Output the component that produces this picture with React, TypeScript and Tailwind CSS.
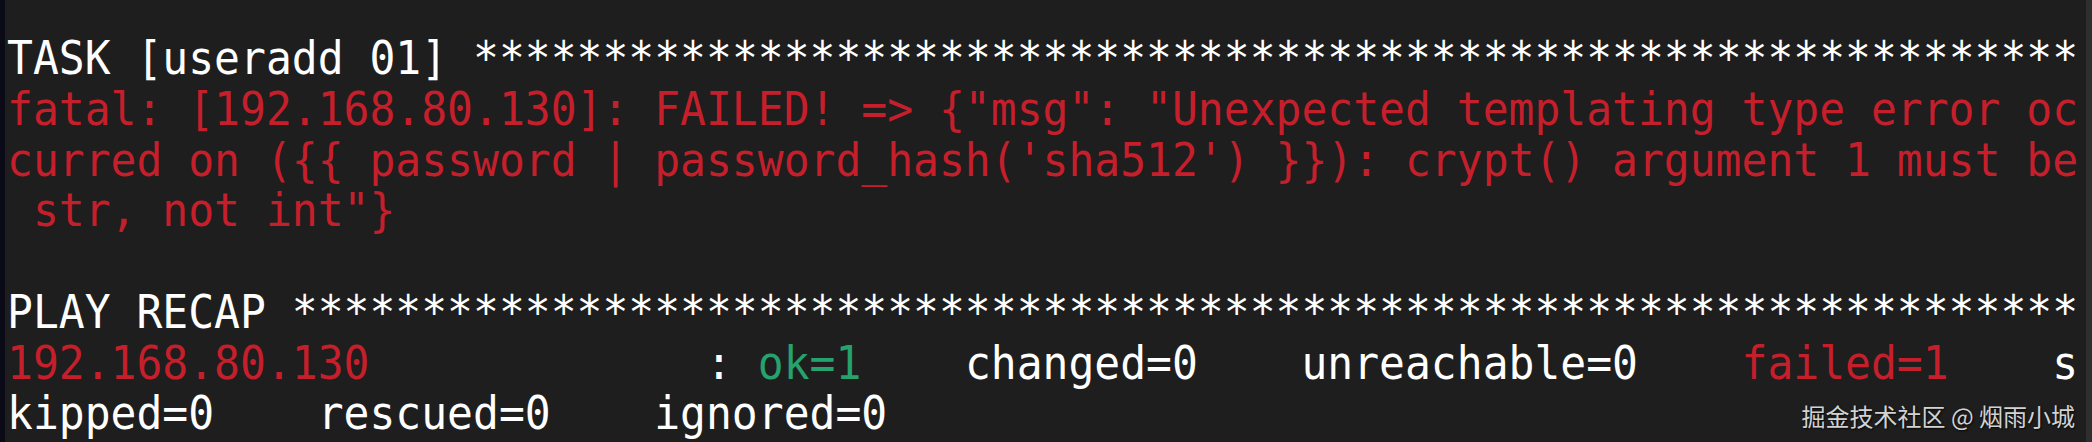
const mono = "font-['DejaVu_Sans_Mono',monospace]";

const lines: { text: string; color: string }[][] = [
  [
    { text: "TASK [useradd 01] ", color: "text-white" },
    { text: "*".repeat(62), color: "text-white" },
  ],
  [
    {
      text: 'fatal: [192.168.80.130]: FAILED! => {"msg": "Unexpected templating type error oc',
      color: "text-[#c61f2c]",
    },
  ],
  [
    {
      text: "curred on ({{ password | password_hash('sha512') }}): crypt() argument 1 must be",
      color: "text-[#c61f2c]",
    },
  ],
  [{ text: ' str, not int"}', color: "text-[#c61f2c]" }],
  [{ text: " ", color: "text-white" }],
  [{ text: "PLAY RECAP " + "*".repeat(69), color: "text-white" }],
  [
    { text: "192.168.80.130             ", color: "text-[#c61f2c]" },
    { text: ": ", color: "text-white" },
    { text: "ok=1", color: "text-[#26a26c]" },
    { text: "    changed=0    unreachable=0    ", color: "text-white" },
    { text: "failed=1", color: "text-[#c61f2c]" },
    { text: "    s", color: "text-white" },
  ],
  [{ text: "kipped=0    rescued=0    ignored=0", color: "text-white" }],
];

export default function App() {
  return (
    <div className="relative flex h-[442px] w-[2092px] overflow-hidden bg-[#1e1e1e]">
      <div className="w-[5px] shrink-0 bg-[#0b0b18]" />
      <div className="flex-1 pl-[2px] pt-[33px]">
        {/* terminal text is slightly taller than its monospace width */}
        <div className={`origin-top-left scale-y-[1.08] text-[43px] leading-[47.04px] ${mono}`}>
          {lines.map((segs, i) => (
            <div key={i} className="whitespace-pre">
              {segs.map((s, j) => (
                <span key={j} className={s.color}>
                  {s.text}
                </span>
              ))}
            </div>
          ))}
        </div>
      </div>
      <div className="w-[6px] shrink-0 bg-[#2e2e2e]" />
      <div className="absolute bottom-[14px] right-[17px] text-[24px] leading-none text-[#d2d2d2] [text-shadow:1px_1px_2px_rgba(0,0,0,0.8)] font-['Noto_Sans_CJK_SC',sans-serif]">
        掘金技术社区 @ 烟雨小城
      </div>
    </div>
  );
}
